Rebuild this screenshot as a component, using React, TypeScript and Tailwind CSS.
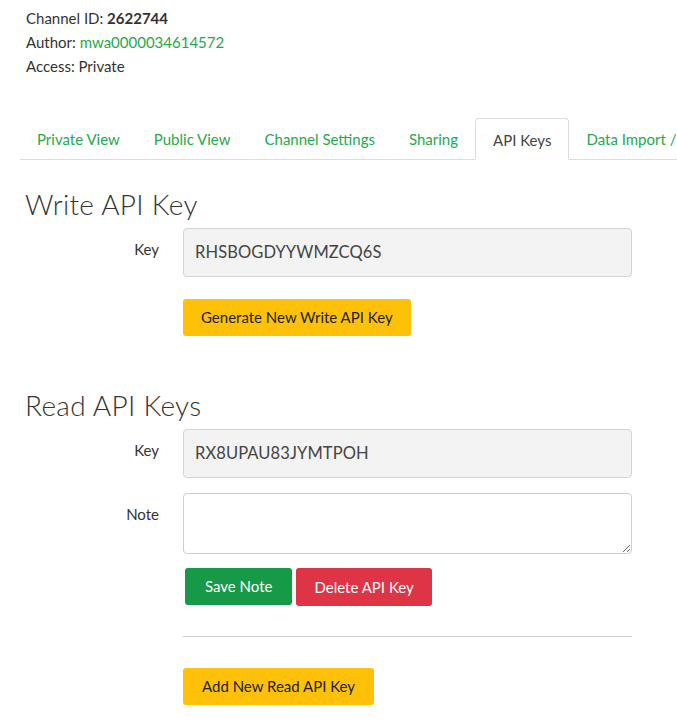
import React from "react";

const tabs = ["Private View", "Public View", "Channel Settings", "Sharing", "API Keys", "Data Import / Export"];

const FormRow = ({ label, children, className = "" }: { label: string; children: React.ReactNode; className?: string }) => (
  <div className={`flex ${className}`}>
    <div className="w-[134px] shrink-0 pt-[10px] text-right text-[15px] text-[#333]">{label}</div>
    <div className="ml-[24px] w-[449px]">{children}</div>
  </div>
);

const KeyBox = ({ value }: { value: string }) => (
  <div className="flex h-[49px] items-center rounded-[4px] border border-[#d4d4d4] bg-[#f3f3f3] pl-[11px] text-[16.5px] tracking-[0.1px] text-[#444]">
    {value}
  </div>
);

export default function App() {
  return (
    <div className="min-h-[725px] w-[677px] overflow-hidden bg-white font-['Lato',sans-serif] text-[#333]">
      <div className="pl-[26px] pt-[6px] text-[15px] leading-6">
        <div>
          Channel ID: <span className="font-bold">2622744</span>
        </div>
        <div>
          Author: <span className="text-[#26a94b]">mwa0000034614572</span>
        </div>
        <div>Access: Private</div>
      </div>

      <ul className="ml-[20px] mt-[40px] flex whitespace-nowrap border-b border-[#dddddd]">
        {tabs.map((t) => (
          <li
            key={t}
            className={
              t === "API Keys"
                ? "-mb-px flex h-[42px] items-center rounded-t-[4px] border border-b-white border-[#dddddd] bg-white px-[17px] pt-[2px] text-[15px] text-[#444]"
                : "flex h-[41px] items-center px-[17px] pt-[2px] text-[15px] text-[#26a94b]"
            }
          >
            {t}
          </li>
        ))}
      </ul>

      <div className="pl-[25px]">
        <h2 className="mt-[26px] text-[28px] font-light leading-[36px] tracking-[0.3px] text-[#333]">Write API Key</h2>
        <FormRow label="Key" className="mt-[6px]">
          <KeyBox value="RHSBOGDYYWMZCQ6S" />
          <button className="mt-[22px] h-[37px] rounded-[3px] bg-[#ffc107] px-[18px] text-[15px] text-[#222]">
            Generate New Write API Key
          </button>
        </FormRow>

        <h2 className="mt-[51px] text-[28px] font-light leading-[36px] tracking-[0.3px] text-[#333]">Read API Keys</h2>
        <FormRow label="Key" className="mt-[6px]">
          <KeyBox value="RX8UPAU83JYMTPOH" />
        </FormRow>
        <FormRow label="Note" className="mt-[15px]">
          <textarea className="block h-[61px] w-full resize-y rounded-[4px] border border-[#cfcfcf] bg-white" />
          <div className="mt-[14px] flex gap-[4px] pl-[2px]">
            <button className="h-[37px] rounded-[3px] bg-[#169a48] px-[20px] text-[15px] text-white">Save Note</button>
            <button className="h-[38px] rounded-[3px] bg-[#dd3545] px-[18px] text-[15px] text-white">Delete API Key</button>
          </div>
          <hr className="mt-[30px] border-[#d0d0d0]" />
          <button className="mt-[31px] h-[37px] rounded-[3px] bg-[#ffc107] px-[19px] text-[15px] text-[#222]">
            Add New Read API Key
          </button>
        </FormRow>
      </div>
    </div>
  );
}
